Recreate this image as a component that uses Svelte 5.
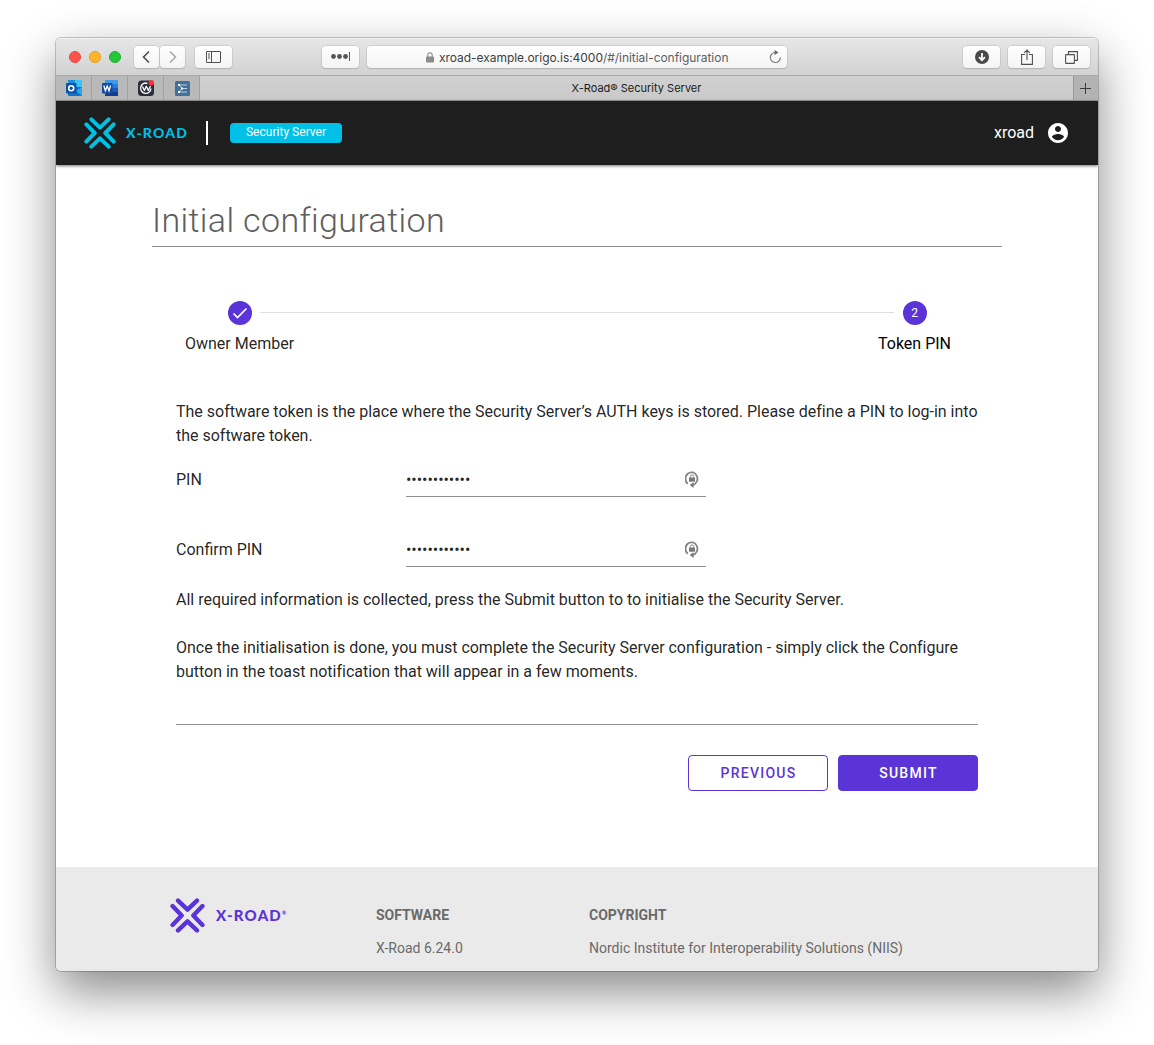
<script>
  const pins = ['PIN', 'Confirm PIN'];
  const dots = '•'.repeat(12);
</script>

{#snippet mark()}
  <svg class="mark" viewBox="0 0 96 96" fill="none" stroke="currentColor" stroke-width="12" stroke-linecap="round" stroke-linejoin="round">
    <path d="M22 7 48 32 74 7M22 89 48 64 74 89M7 22 32 48 7 74M89 22 64 48 89 74" />
  </svg>
{/snippet}

<div class="desktop">
  <div class="window">
    <div class="toolbar">
      <div class="lights"><i class="red"></i><i class="amber"></i><i class="green"></i></div>
      <div class="nav">
        <div class="tb half"><svg width="26" height="22" viewBox="0 0 26 22"><path d="M15 5.500 9.500 11 15 16.500" fill="none" stroke="#484848" stroke-width="1.500" /></svg></div>
        <div class="tb half"><svg width="26" height="22" viewBox="0 0 26 22"><path d="M10 5.500 15.500 11 10 16.500" fill="none" stroke="#a8a8a8" stroke-width="1.500" /></svg></div>
      </div>
      <div class="tb side"><svg width="15" height="12" viewBox="0 0 15 12" fill="none" stroke="#505050"><rect x=".5" y=".5" width="14" height="11" rx=".5" /><path d="M5.500 .5v11M2 3h2M2 5h2M2 7h2" /></svg></div>
      <div class="tb more"><svg width="22" height="12" viewBox="0 0 22 12" fill="#555"><circle cx="3.500" cy="5.500" r="2.400" /><circle cx="9.500" cy="5.500" r="2.400" /><circle cx="15.500" cy="5.500" r="2.400" /><path d="M19 1h1v9h-1z" /></svg></div>
      <div class="address">
        <svg class="lock" width="8" height="11" viewBox="0 0 8 11"><rect y="4.500" width="8" height="6" rx=".8" fill="#8c8c8c" /><path d="M1.800 5V3a2.200 2.200 0 0 1 4.400 0v2" fill="none" stroke="#8c8c8c" stroke-width="1.100" /></svg>
        <span class="url">xroad-example.origo.is:4000<em>/#/initial-configuration</em></span>
        <svg class="reload" width="14" height="14" viewBox="0 0 14 14"><path d="M7.500 2.500A5 5 0 1 0 12.300 7.500" fill="none" stroke="#777" stroke-width="1.200" /><path d="M6.500 0v5l4-2.500z" fill="#666" /></svg>
      </div>
      <div class="tools">
        <div class="tb"><svg width="14" height="14" viewBox="0 0 14 14"><circle cx="7" cy="7" r="7" fill="#494949" /><path d="M7 3v7M4 7.200l3 3 3-3" fill="none" stroke="#fff" stroke-width="1.800" /></svg></div>
        <div class="tb"><svg width="12" height="16" viewBox="0 0 12 16" fill="none" stroke="#505050" stroke-width="1.100"><path d="M4 5.500H.6v9.900h10.800V5.500H8M6 11V1M3.200 3.800 6 1l2.800 2.800" /></svg></div>
        <div class="tb"><svg width="13" height="13" viewBox="0 0 13 13" fill="none" stroke="#505050" stroke-width="1.100"><rect x=".6" y="3.600" width="8.800" height="8.800" rx=".4" /><path d="M3.500 3.500V.6h8.900v8.800H9.600" /></svg></div>
      </div>
    </div>

    <div class="tabs">
      <div class="pin"><svg width="16" height="16" viewBox="0 0 16 16"><rect x="2" width="14" height="16" rx="1" fill="#1076c9" /><path d="M2 0h7v6H2z" fill="#1b90df" /><path d="M9 0h7v7H9z" fill="#38c6f7" /><path d="m16 7-6 4 6 5z" fill="#28a8ea" /><rect y="3" width="10.500" height="10.500" rx="1" fill="#0b53a8" /><circle cx="5.200" cy="8.200" r="2.500" fill="none" stroke="#fff" stroke-width="1.600" /></svg></div>
      <div class="pin"><svg width="16" height="16" viewBox="0 0 16 16"><rect x="3" width="13" height="16" rx="1" fill="#185abd" /><path d="M3 0h13v4H3z" fill="#3b9be8" /><path d="M3 4h13v4H3z" fill="#287bd8" /><path d="M3 12h13v4H3z" fill="#123d8c" /><rect y="3" width="10.500" height="10.500" rx="1" fill="#174aa5" /><path d="m1.800 5.500 1.600 5.200L5.200 6 7 10.700l1.600-5.200" fill="none" stroke="#fff" stroke-width="1.300" /></svg></div>
      <div class="pin"><svg width="16" height="16" viewBox="0 0 16 16"><rect y=".5" width="16" height="15.500" rx="3.500" fill="#2b2d3d" /><path d="M9.500 3.300A5.200 5.200 0 1 0 13 8.500M4.500 6.500l1.900 4L8.300 6.300l2 4.200L12.500 6" fill="none" stroke="#fff" stroke-width="1.300" stroke-linejoin="round" /><circle cx="13.400" cy="2.700" r="2.700" fill="#ff2f35" /></svg></div>
      <div class="pin last"><svg width="15" height="15" viewBox="0 0 15 15"><rect width="15" height="15" rx="1.500" fill="#41719a" /><path d="M3 4h9M6 7.500h6M3 11h9M4 4l3 3.500L4 11" fill="none" stroke="#dce8f0" stroke-width=".8" /><path d="M3 3h2v2H3zM6 6.500h2v2H6zM3 10h2v2H3z" fill="#fff" /></svg></div>
      <div class="active">X-Road® Security Server</div>
      <div class="plus"><svg width="11" height="11" viewBox="0 0 11 11"><path d="M5.500 0v11M0 5.500h11" stroke="#3c3c3c" /></svg></div>
    </div>

    <header>
      {@render mark()}
      <span class="brand">X-ROAD</span>
      <span class="bar"></span>
      <span class="chip">Security Server</span>
      <span class="user">xroad</span>
      <svg class="account" viewBox="2 2 20 20" fill="#fff"><path d="M12 2C6.480 2 2 6.480 2 12s4.480 10 10 10 10-4.480 10-10S17.520 2 12 2zm0 3c1.660 0 3 1.340 3 3s-1.340 3-3 3-3-1.340-3-3 1.340-3 3-3zm0 14.200c-2.500 0-4.710-1.280-6-3.220.030-1.990 4-3.080 6-3.080 1.990 0 5.970 1.090 6 3.080-1.290 1.940-3.500 3.220-6 3.220z" /></svg>
    </header>

    <main>
      <h1>Initial configuration</h1>
      <div class="steps">
        <div class="step">
          <span class="dot"><svg width="16" height="16" viewBox="0 0 16 16"><path d="m1.500 8.500 4 4 9-9" fill="none" stroke="#fff" stroke-width="1.700" /></svg></span>
          <span class="label">Owner Member</span>
        </div>
        <div class="track"></div>
        <div class="step current">
          <span class="dot">2</span>
          <span class="label">Token PIN</span>
        </div>
      </div>
      <section>
        <p>The software token is the place where the Security Server’s AUTH keys is stored. Please define a PIN to log-in into<br />the software token.</p>
        {#each pins as pin}
          <div class="row">
            <span class="name">{pin}</span>
            <div class="field">
              <span class="secret">{dots}</span>
              <svg width="14" height="17" viewBox="0 0 14 17"><path d="M2.800 12.800A6 6.400 0 1 1 7.500 14" fill="none" stroke="#858585" stroke-width="1.800" /><path d="M8.500 11.200v5.800L4.700 14z" fill="#777" /><rect x="4" y="6.500" width="6" height="4.200" fill="#777" /><path d="M5.400 7V5.500a1.600 1.600 0 0 1 3.200 0V7" fill="none" stroke="#888" /></svg>
            </div>
          </div>
        {/each}
        <p>All required information is collected, press the Submit button to to initialise the Security Server.</p>
        <p class="after">Once the initialisation is done, you must complete the Security Server configuration - simply click the Configure<br />button in the toast notification that will appear in a few moments.</p>
        <div class="actions">
          <button class="outline">PREVIOUS</button>
          <button class="solid">SUBMIT</button>
        </div>
      </section>
    </main>

    <footer>
      <div class="flogo">{@render mark()}<span class="brand">X-ROAD<sup>®</sup></span></div>
      <div class="col software"><b>SOFTWARE</b><span>X-Road 6.24.0</span></div>
      <div class="col"><b>COPYRIGHT</b><span>Nordic Institute for Interoperability Solutions (NIIS)</span></div>
    </footer>
  </div>
</div>

<style>
  :global(body) { background: #fff; }
  * { box-sizing: border-box; }
  svg { display: block; flex: none; }
  .desktop { height: 1045px; padding: 38px 56px 74px; overflow: hidden; font-family: Roboto, "Liberation Sans", sans-serif; }
  .window { height: 933px; display: flex; flex-direction: column; border-radius: 5px; overflow: hidden; background: #fff; box-shadow: 0 0 0 1px rgba(0,0,0,.2), 0 20px 50px rgba(0,0,0,.47); }
  .toolbar { height: 38px; flex: none; display: flex; align-items: center; padding: 0 8px 0 13px; background: linear-gradient(#e6e6e6, #d2d2d2); border-top: 1px solid #f3f3f3; border-bottom: 1px solid #a8a8a8; }
  .lights { display: flex; gap: 8px; width: 65px; }
  .lights i { width: 12px; height: 12px; border-radius: 50%; border: 1px solid; }
  .red { background: #ff544d; border-color: #e2463f !important; }
  .amber { background: #ffb429; border-color: #e19d22 !important; }
  .green { background: #25c63a; border-color: #1dac2b !important; }
  .tb, .address { background: linear-gradient(#fff, #f4f4f4); border-radius: 4px; box-shadow: 0 0 0 .5px #bbb, 0 1px 1px #aaa; height: 22px; }
  .tb { width: 37px; display: flex; align-items: center; justify-content: center; }
  .nav { display: flex; gap: 1px; }
  .half { width: 25px; }
  .side { margin-left: 10px; }
  .more { margin-left: 90px; }
  .address { width: 420px; margin-left: 8px; display: flex; align-items: center; padding: 0 5px 0 59px; }
  .url { margin-left: 5px; padding-top: 2px; font: 12px/22px Inter, sans-serif; letter-spacing: -.04px; color: #3e3e3e; white-space: nowrap; }
  .url em { font-style: normal; color: #606060; }
  .reload { margin-left: auto; }
  .tools { margin-left: auto; display: flex; gap: 8px; }
  .tabs { height: 25px; flex: none; display: flex; background: #b9b9b9; border-bottom: 1px solid #999; }
  .pin { width: 36px; border-right: 1px solid #a0a0a0; display: flex; align-items: center; justify-content: center; }
  .last { padding-left: 1px; }
  .active { flex: 1; background: linear-gradient(#d1d1d1, #c9c9c9); text-align: center; font: 11px/24px Inter, sans-serif; color: #202020; }
  .plus { width: 25px; border-left: 1px solid #999; background: #b3b3b3; display: flex; align-items: center; justify-content: center; padding-right: 1px; }
  header { height: 64px; flex: none; position: relative; background: #1e1e1e; display: flex; align-items: center; padding: 0 30px 0 28px; color: #00c0e4; box-shadow: 0 1px 3px rgba(0,0,0,.55); }
  .mark { width: 32px; height: 32px; }
  .brand { font: 900 14px/20px Lato, sans-serif; letter-spacing: 1.2px; white-space: nowrap; }
  header .brand { margin-left: 10px; width: 63px; }
  .bar { width: 2px; height: 24px; margin-left: 17px; background: #fff; }
  .chip { width: 112px; height: 20px; margin-left: 22px; border-radius: 4px; background: #00c1e5; color: #fff; font-size: 12px; line-height: 19px; text-align: center; letter-spacing: .03px; }
  .user { margin-left: auto; color: #fff; font-size: 16px; line-height: 24px; }
  .account { width: 20px; height: 20px; margin-left: 14px; }
  main { height: 702px; flex: none; padding: 33px 96px 0; color: rgba(0,0,0,.87); }
  h1 { margin: 0; height: 49px; border-bottom: 1px solid #8f8f8f; font-size: 34px; font-weight: 300; line-height: 44px; color: #5e5e5e; letter-spacing: .37px; white-space: nowrap; }
  .steps { display: flex; margin-top: 54px; height: 99px; font-size: 16px; }
  .step { width: 175px; display: flex; flex-direction: column; align-items: center; gap: 8px; }
  .dot { width: 24px; height: 24px; border-radius: 50%; background: #5b34d7; color: #fff; font-size: 12px; display: flex; align-items: center; justify-content: center; }
  .label { line-height: 22px; white-space: nowrap; }
  .current .label { color: #000; }
  .track { width: 634px; margin: 11px -67px 0; height: 1px; background: #dedede; }
  section { padding: 0 24px; }
  p { margin: 0; font-size: 16px; line-height: 24px; white-space: nowrap; letter-spacing: -.01px; }
  .row { height: 70px; display: flex; padding-top: 14px; font-size: 16px; line-height: 36px; }
  .name { width: 230px; }
  .field { width: 300px; height: 35px; border-bottom: 1px solid #8f8f8f; display: flex; justify-content: space-between; align-items: center; padding-right: 7px; }
  .secret { padding-top: 2px; letter-spacing: -.04px; }
  .after { margin-top: 24px; }
  .actions { margin-top: 40px; border-top: 1px solid #8f8f8f; padding-top: 30px; display: flex; justify-content: flex-end; gap: 10px; }
  button { width: 140px; height: 36px; padding: 0 0 0 1px; border-radius: 4px; border: 1px solid #5b34d7; font: 500 14px/34px Roboto, sans-serif; letter-spacing: 1.25px; }
  .outline { background: #fff; color: #5b34d7; }
  .solid { background: #5b34d7; color: #fff; }
  footer { height: 104px; background: #eaeaea; display: flex; padding: 0 0 0 114px; color: #6a6a6a; font-size: 14px; }
  .flogo { width: 206px; height: 97px; display: flex; align-items: center; color: #5b34d7; }
  .flogo .mark { width: 35px; height: 35px; }
  .flogo .brand { margin-left: 11px; padding-bottom: 1px; font-size: 15px; }
  sup { font-size: 5px; line-height: 0; vertical-align: 6px; letter-spacing: 0; }
  .col { display: flex; flex-direction: column; padding-top: 38px; gap: 13px; line-height: 20px; }
  .software { width: 213px; }
</style>
